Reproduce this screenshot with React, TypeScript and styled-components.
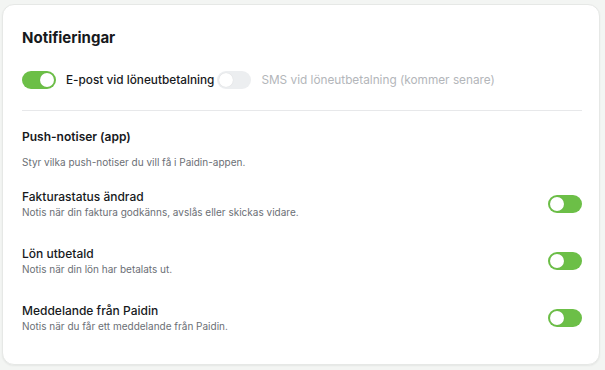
import React from "react";
import styled, { createGlobalStyle } from "styled-components";

const Global = createGlobalStyle`
  html, body { margin: 0; padding: 0; background: #f3f5f3; }
  body { font-family: Inter, "Noto Sans", sans-serif; color: #17191c; }
  * { box-sizing: border-box; }
`;

const Page = styled.div`
  padding: 4px 5px 5px 2px;
`;

const Card = styled.section`
  background: #ffffff;
  border-radius: 12px;
  border: 1px solid #e6e8e6;
  box-shadow: 0 1px 2px rgba(0, 0, 0, 0.06);
  height: 361px;
  padding: 22px 17px 0 19px;
  display: flex;
  flex-direction: column;
`;

const Title = styled.h2`
  margin: 0;
  font-size: 15px;
  font-weight: 700;
  line-height: 22px;
`;

const ChannelRow = styled.div`
  display: flex;
  align-items: center;
  margin-top: 22px;
  height: 18px;
`;

const Channel = styled.label<{ $disabled?: boolean }>`
  display: flex;
  align-items: center;
  gap: 10px;
  margin-right: 3px;
  font-size: 11.8px;
  color: ${(p) => (p.$disabled ? "#b3b6ba" : "#17191c")};
  font-weight: ${(p) => (p.$disabled ? 400 : 500)};
`;

const Track = styled.span<{ $on: boolean }>`
  position: relative;
  display: inline-block;
  flex: none;
  width: 34px;
  height: 18px;
  border-radius: 9px;
  background: ${(p) => (p.$on ? "#6cbf47" : "#eceef0")};
`;

const Knob = styled.span<{ $left: boolean }>`
  position: absolute;
  top: 2px;
  left: ${(p) => (p.$left ? "2px" : "18px")};
  width: 14px;
  height: 14px;
  border-radius: 50%;
  background: #ffffff;
  box-shadow: 0 0 1px rgba(0, 0, 0, 0.15);
`;

const Divider = styled.hr`
  border: 0;
  border-top: 1px solid #e7e8ea;
  margin: 21px 0 0;
`;

const SectionTitle = styled.h3`
  margin: 18px 0 0;
  font-size: 12px;
  font-weight: 600;
  line-height: 16px;
`;

const SectionDesc = styled.p`
  margin: 10px 0 0;
  font-size: 10px;
  line-height: 14px;
  color: #6b6f75;
`;

const List = styled.div`
  display: flex;
  flex-direction: column;
  gap: 27px;
  margin-top: 20px;
`;

const Item = styled.div`
  display: flex;
  align-items: center;
  justify-content: space-between;
`;

const ItemText = styled.div`
  display: flex;
  flex-direction: column;
`;

const ItemTitle = styled.div`
  font-size: 12px;
  font-weight: 500;
  line-height: 15px;
`;

const ItemDesc = styled.div`
  margin-top: 1px;
  font-size: 10px;
  line-height: 14px;
  color: #6b6f75;
`;

const Toggle = ({ on, knobLeft }: { on: boolean; knobLeft: boolean }) => (
  <Track $on={on}>
    <Knob $left={knobLeft} />
  </Track>
);

const items = [
  { title: "Fakturastatus ändrad", desc: "Notis när din faktura godkänns, avslås eller skickas vidare." },
  { title: "Lön utbetald", desc: "Notis när din lön har betalats ut." },
  { title: "Meddelande från Paidin", desc: "Notis när du får ett meddelande från Paidin." },
];

export default function App() {
  return (
    <>
      <Global />
      <Page>
        <Card>
          <Title>Notifieringar</Title>
          <ChannelRow>
            <Channel>
              <Toggle on knobLeft={false} />
              E-post vid löneutbetalning
            </Channel>
            <Channel $disabled>
              <Toggle on={false} knobLeft />
              SMS vid löneutbetalning (kommer senare)
            </Channel>
          </ChannelRow>
          <Divider />
          <SectionTitle>Push-notiser (app)</SectionTitle>
          <SectionDesc>Styr vilka push-notiser du vill få i Paidin-appen.</SectionDesc>
          <List>
            {items.map((it) => (
              <Item key={it.title}>
                <ItemText>
                  <ItemTitle>{it.title}</ItemTitle>
                  <ItemDesc>{it.desc}</ItemDesc>
                </ItemText>
                <Toggle on knobLeft />
              </Item>
            ))}
          </List>
        </Card>
      </Page>
    </>
  );
}
